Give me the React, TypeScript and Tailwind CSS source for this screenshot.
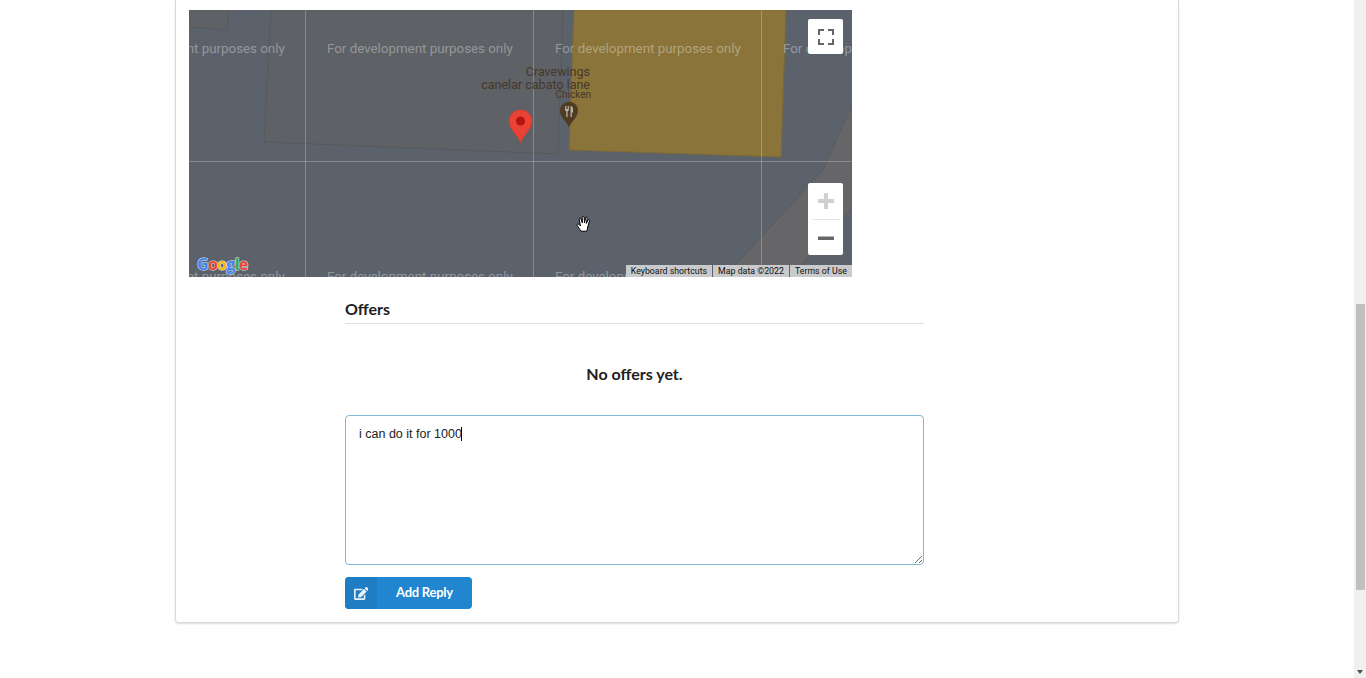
import { FaEdit } from "react-icons/fa";

const lato = "font-['Lato','Open_Sans',sans-serif]";

function Watermark({ left, top }: { left: number; top: number }) {
  return (
    <span
      className="absolute whitespace-nowrap font-['Roboto',sans-serif] text-[13.33px] leading-[16px] text-white/35"
      style={{ left, top }}
    >
      For development purposes only
    </span>
  );
}

function MapLabel({ right, top, size, children }: { right: number; top: number; size: number; children: string }) {
  return (
    <span
      className="absolute whitespace-nowrap font-['Roboto',sans-serif] text-[#46382c]"
      style={{ right, top, fontSize: size, lineHeight: `${Math.round(size) + 1}px` }}
    >
      {children}
    </span>
  );
}

function GoogleMapMock() {
  return (
    <div className="relative h-[267px] w-[663px] overflow-hidden bg-[#5b626b]">
      <svg className="absolute inset-0" width="663" height="267" viewBox="0 0 663 267">
        <polygon points="0,17 38,20 40,0 0,0" fill="#5e6165" stroke="#585a5c" strokeWidth="1" />
        <polygon points="82,0 75,132 369,144 374,0" fill="#5e6165" stroke="#585a5c" strokeWidth="1" />
        <polygon points="663,95 634,160 551,250 533,267 601,267 663,198" fill="#666668" stroke="#5a5c5e" strokeWidth="1" />
        <polygon points="385,0 380,140 592,147 597,0" fill="#8a7439" stroke="#7a6a3a" strokeWidth="1" />
        <path d="M116.5 0V267M344.5 0V267M572.5 0V267M0 151.5H663" stroke="#ffffff" strokeOpacity="0.25" strokeWidth="1" />
      </svg>

      <Watermark left={-90} top={31} />
      <Watermark left={138} top={31} />
      <Watermark left={366} top={31} />
      <Watermark left={594} top={31} />
      <Watermark left={-90} top={259} />
      <Watermark left={138} top={259} />
      <Watermark left={366} top={259} />

      <MapLabel right={262} top={55} size={12.5}>Cravewings</MapLabel>
      <MapLabel right={262} top={68} size={12.5}>canelar cabato lane</MapLabel>
      <MapLabel right={261} top={79} size={10}>Chicken</MapLabel>

      <svg className="absolute left-[370px] top-[91px]" width="20" height="27" viewBox="0 0 20 27">
        <path d="M10 26.5C8.600 21.500 1 17 1 9.600 1 4.600 5 .8 10 .8s9 3.800 9 8.800c0 7.400-7.600 11.900-9 16.900z" fill="#4e3d23" />
        <path d="M6 5v3.500c0 1 .6 1.600 1.300 1.800V16h1.300v-5.700c.7-.2 1.300-.8 1.300-1.800V5H9v3H8.300V5H7.500v3H6.800V5zM11.500 5v11h1.300v-4.500h1.200V8c0-1.800-1-3-2.500-3z" fill="#b8b0a0" />
      </svg>

      <svg className="absolute left-[319px] top-[99px]" width="25" height="35" viewBox="0 0 25 35">
        <path d="M12.500 34C11 27 1.200 20.500 1.200 12.200 1.200 5.800 6.200 1 12.500 1s11.300 4.800 11.300 11.200C23.800 20.500 14 27 12.500 34z" fill="#ea4335" stroke="#d93b2d" strokeWidth="0.8" />
        <circle cx="12.500" cy="12" r="4.500" fill="#b3140f" />
      </svg>

      <svg className="absolute left-[386px] top-[204px]" width="20" height="20" viewBox="0 0 18 18">
        <path
          d="M5.500 15.500C4.300 13.800 2.700 11.500 2 10.300c-.6-1 .6-1.800 1.500-1L5 10.800 3.800 4.800c-.2-1.100 1.300-1.500 1.600-.4L6.600 8 6.500 3c0-1.200 1.600-1.200 1.700 0l.4 5 .9-4.500c.2-1.100 1.700-.8 1.500.3L10.200 8.500l1.500-3c.5-1 1.800-.4 1.400.6-.6 1.900-1.300 3.800-1.600 5.600-.2 1.500-.5 2.800-1 3.800z"
          fill="#ffffff"
          stroke="#000000"
          strokeWidth="0.9"
          strokeLinejoin="round"
        />
      </svg>

      <span className="absolute left-[8px] top-[242px] whitespace-nowrap font-['Open_Sans',sans-serif] text-[16px] font-bold leading-[24px] tracking-[-0.7px] [-webkit-text-stroke:1px_#e4e4e4] [paint-order:stroke]">
        <span className="text-[#4285f4]">G</span>
        <span className="text-[#ea4335]">o</span>
        <span className="text-[#fbbc05]">o</span>
        <span className="text-[#4285f4]">g</span>
        <span className="text-[#34a853]">l</span>
        <span className="text-[#ea4335]">e</span>
      </span>

      <div className="absolute bottom-0 right-0 flex h-[12px] gap-px font-['Roboto',sans-serif] text-[8.8px] leading-[12px] text-[#111111]">
        <span className="bg-[#c9cacc] px-[5px]">Keyboard shortcuts</span>
        <span className="bg-[#c9cacc] px-[5px]">Map data ©2022</span>
        <span className="bg-[#c9cacc] px-[5px]">Terms of Use</span>
      </div>

      <button className="absolute left-[619px] top-[9px] flex h-[35px] w-[35px] items-center justify-center rounded-[2px] bg-white">
        <svg width="18" height="18" viewBox="0 0 18 18" fill="none" stroke="#666666" strokeWidth="2">
          <path d="M2 7V2h5M11 2h5v5M16 11v5h-5M7 16H2v-5" />
        </svg>
      </button>

      <div className="absolute left-[619px] top-[173px] flex h-[72px] w-[35px] flex-col items-center rounded-[2px] bg-white">
        <div className="flex h-[36px] w-full items-center justify-center">
          <svg width="18" height="18" viewBox="0 0 18 18" fill="#d0d0d0">
            <path d="M7 1h4v6h6v4h-6v6H7v-6H1V7h6z" />
          </svg>
        </div>
        <div className="h-px w-[28px] bg-[#e6e6e6]" />
        <div className="flex h-[35px] w-full items-center justify-center">
          <svg width="18" height="18" viewBox="0 0 18 18" fill="#666666">
            <path d="M1 7.500h16v3.500H1z" />
          </svg>
        </div>
      </div>
    </div>
  );
}

export default function App() {
  return (
    <div className="flex h-[678px] w-full overflow-hidden bg-white">
      <main className="min-w-0 flex-1 pl-[175px]">
        <div className="h-[623px] w-[1004px] rounded-b-[4px] border border-t-0 border-[#d9d9da] px-[13px] pt-[10px] shadow-[0_1px_2px_0_rgba(34,36,38,0.15)]">
          <GoogleMapMock />
          <section className={`ml-[156px] w-[579px] text-[#212121] ${lato}`}>
            <h4 className="mt-[22px] border-b border-[#dedede] pb-[4px] text-[16px] font-bold leading-[20px]">Offers</h4>
            <p className="mt-[40px] text-center text-[16px] font-bold leading-[20px]">No offers yet.</p>
            <div className="relative mt-[31px]">
              <textarea
                defaultValue="i can do it for 1000"
                className="block h-[150px] w-full rounded-[4px] border border-[#85b7d9] px-[13px] py-[10px] font-['Liberation_Sans',sans-serif] text-[12.5px] leading-[16px] text-[#212121] caret-transparent outline-none"
              />
              <span className="absolute left-[116px] top-[12px] h-[14px] w-px bg-black" />
            </div>
            <button className="mt-[12px] flex h-[32px] w-[127px] items-center overflow-hidden rounded-[4px] bg-[#2185d0] text-[13px] font-bold tracking-[-0.25px] text-white">
              <span className="flex h-full w-[32px] items-center justify-center bg-[#1f7dc4]">
                <FaEdit className="h-[13px] w-[14.6px] opacity-90" />
              </span>
              <span className="flex-1 pb-[1px] text-center leading-[31px]">Add Reply</span>
            </button>
          </section>
        </div>
      </main>

      <aside className="flex h-full w-[12px] shrink-0 flex-col items-end bg-[#f0f0f0] pr-px">
        <div className="mt-[304px] h-[286px] w-[9px] bg-[#c0c0c0]" />
        <svg className="mr-[-1px] mt-[79px]" width="12" height="6" viewBox="0 0 12 6">
          <path d="M3 1h6L6 5z" fill="#505050" />
        </svg>
      </aside>
    </div>
  );
}
